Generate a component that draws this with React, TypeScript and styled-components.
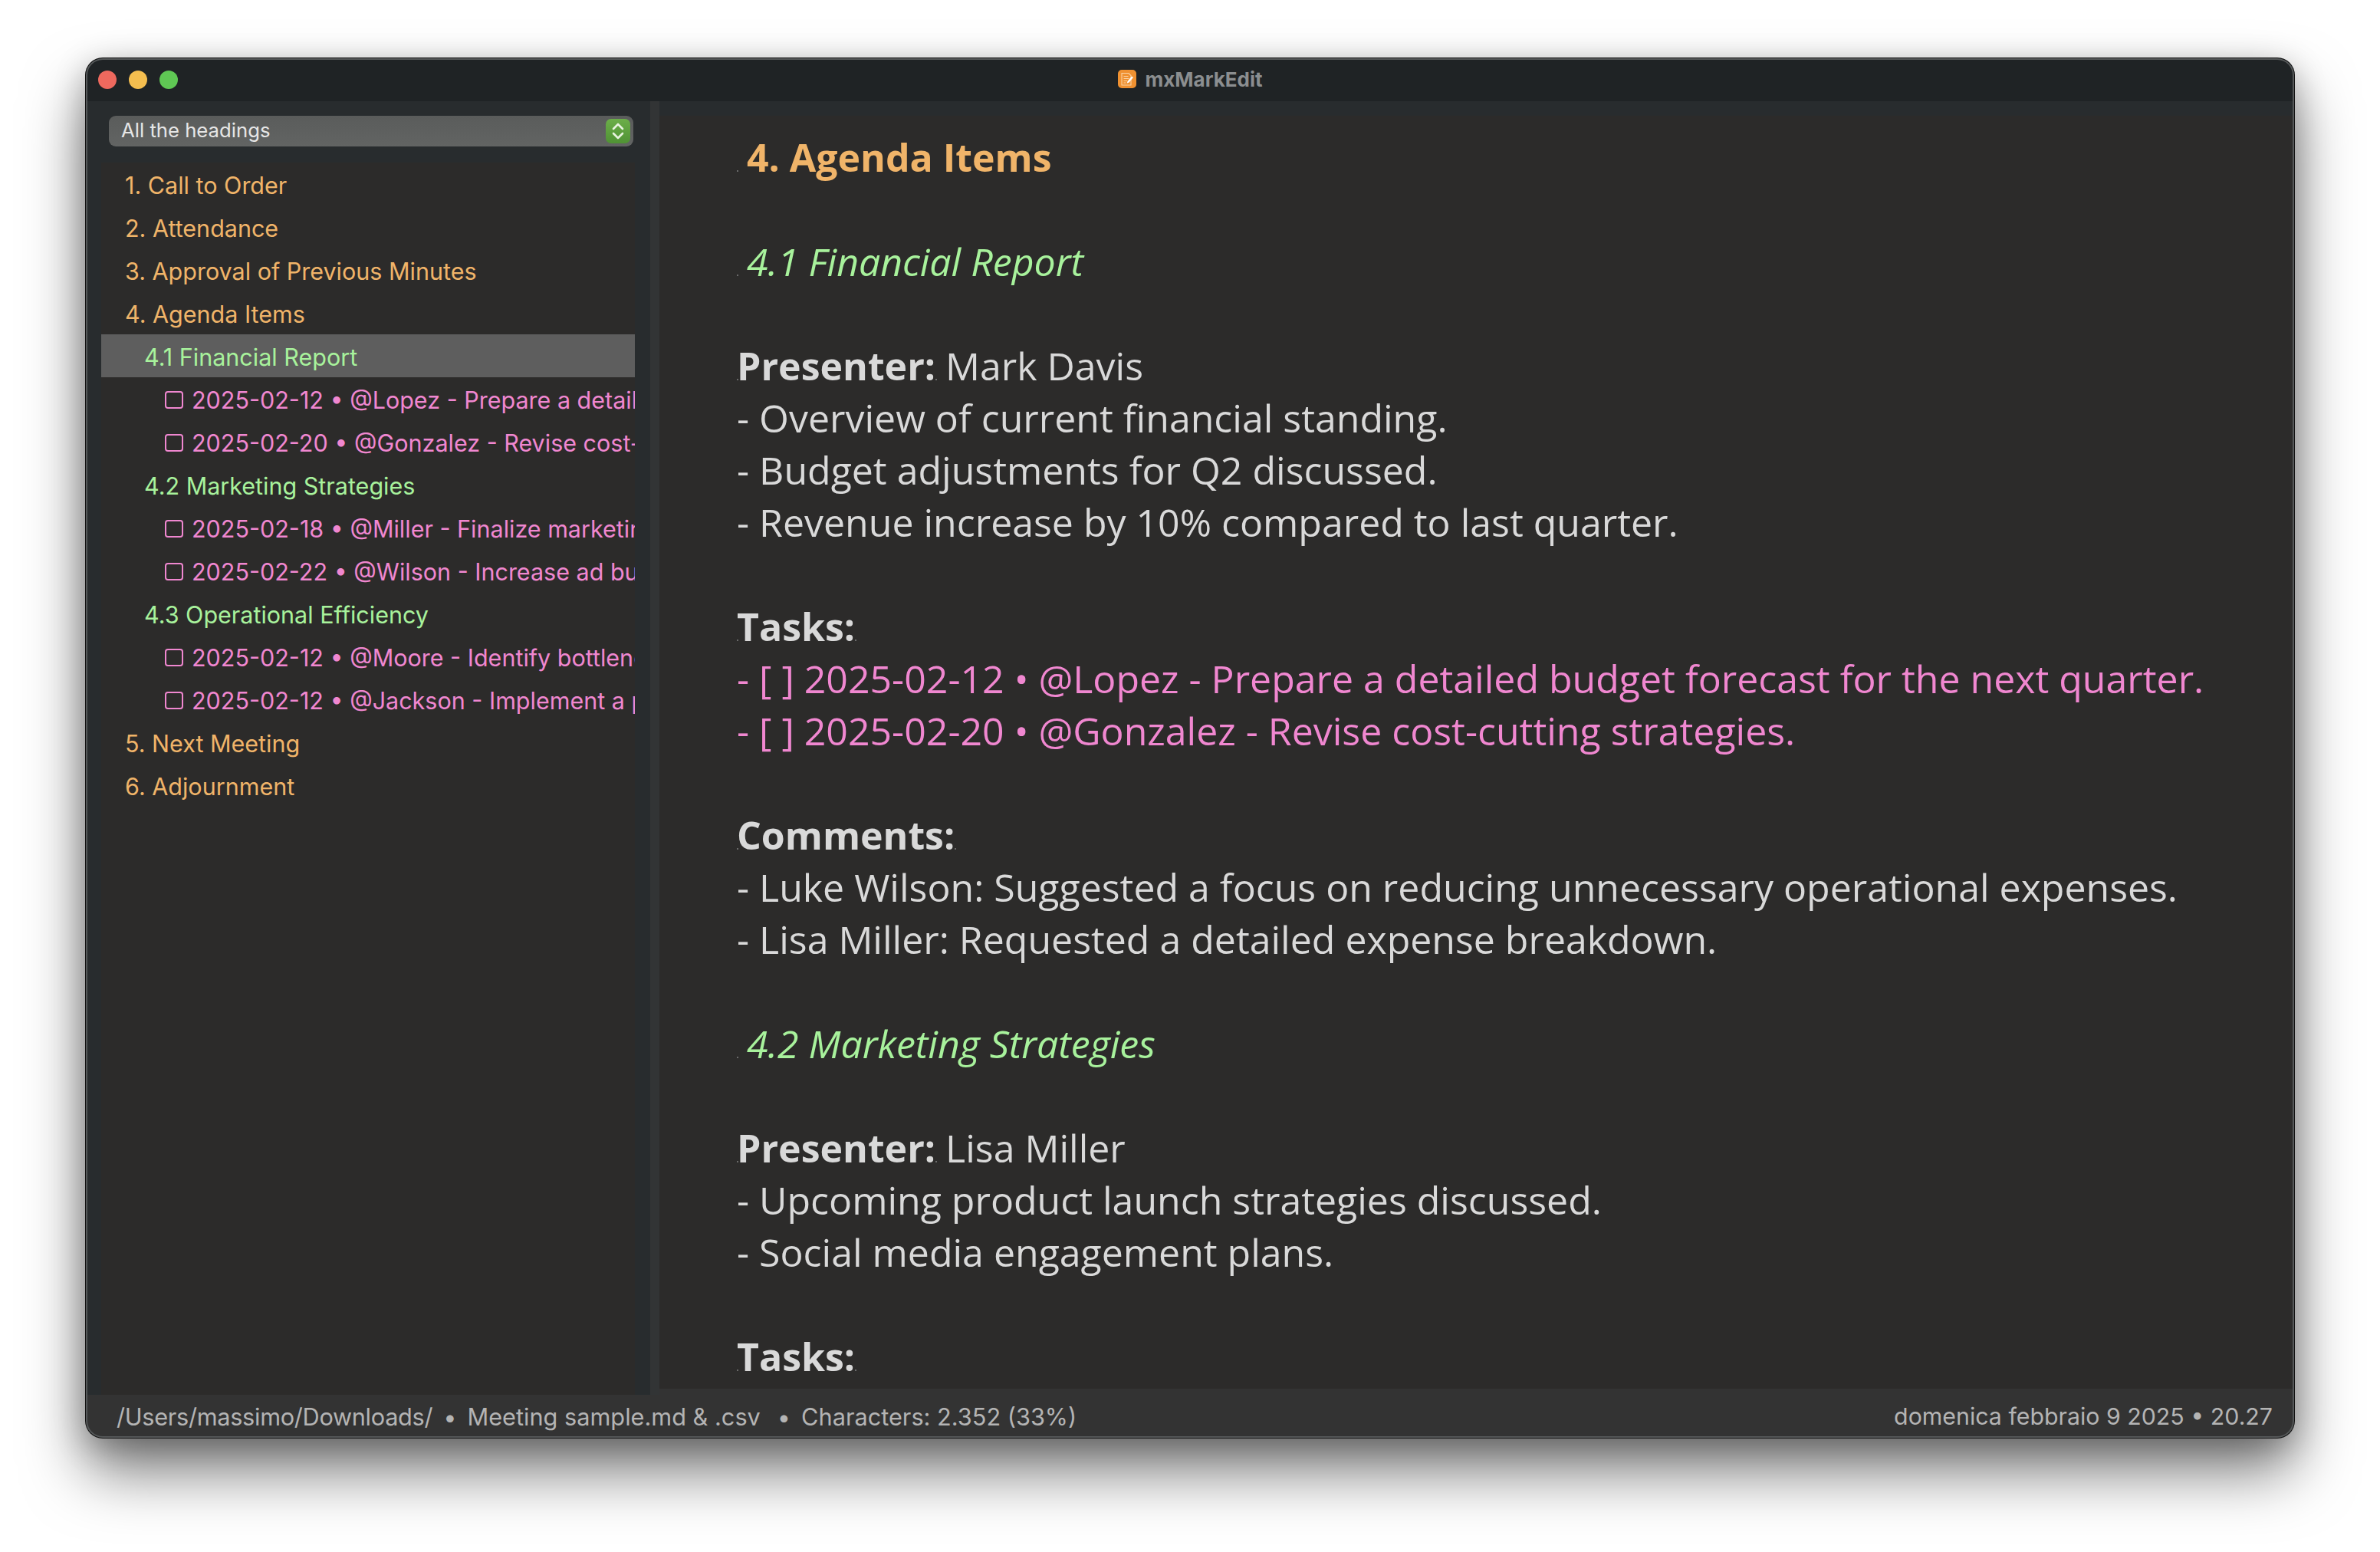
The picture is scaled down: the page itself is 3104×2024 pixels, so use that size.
import React from 'react'
import styled, { createGlobalStyle } from 'styled-components'

const Global = createGlobalStyle`
  html, body { margin: 0; padding: 0; background: #fff; }
  body { width: 3104px; height: 2024px; overflow: hidden; }
`

const Page = styled.div`
  width: 3104px;
  height: 2024px;
  padding: 76px 112px 149px 112px;
  box-sizing: border-box;
  display: flex;
`

const Window = styled.div`
  position: relative;
  flex: 1;
  min-width: 0;
  display: flex;
  flex-direction: column;
  overflow: hidden;
  border-radius: 22px;
  background: #282c2e;
  box-shadow: 0 0 0 1px #111, 0 44px 80px rgba(0, 0, 0, 0.52), 0 10px 40px rgba(0, 0, 0, 0.25);

  &::after {
    content: '';
    position: absolute;
    inset: 0;
    border-radius: 22px;
    box-shadow: inset 0 0 0 2px #555859;
    pointer-events: none;
  }
`

const TitleBar = styled.div`
  position: relative;
  height: 56px;
  flex: none;
  background: #1f2325;
  display: flex;
  align-items: center;
  justify-content: center;
  gap: 12px;
  padding-bottom: 2px;
  box-sizing: border-box;
`

const Lights = styled.div`
  position: absolute;
  left: 16px;
  top: 16px;
  display: flex;
  gap: 16px;
`

const Light = styled.span<{ $color: string }>`
  width: 24px;
  height: 24px;
  border-radius: 50%;
  background: ${(p) => p.$color};
`

const AppName = styled.span`
  font: 700 26px Inter, sans-serif;
  color: #8b8e90;
`

const Body = styled.div`
  flex: 1;
  min-height: 0;
  display: flex;
`

const Sidebar = styled.aside`
  width: 736px;
  flex: none;
  background: #282c2e;
  padding: 19px 0 0 20px;
  box-sizing: border-box;
  display: flex;
  flex-direction: column;
`

const Select = styled.div`
  width: 684px;
  height: 40px;
  margin-left: 10px;
  box-sizing: border-box;
  border-radius: 9px;
  background: linear-gradient(#5a5c5b, #626463);
  padding: 0 4px 3px 16px;
  display: flex;
  align-items: center;
  justify-content: space-between;
  font: 400 25.7px Inter, sans-serif;
  color: #e6e6e6;
`

const Stepper = styled.span`
  width: 32px;
  height: 32px;
  margin-top: 3px;
  border-radius: 7px;
  background: linear-gradient(#6cae49, #4f9234);
  display: flex;
  align-items: center;
  justify-content: center;
`

const Outline = styled.div`
  flex: 1;
  margin-top: 21px;
  width: 696px;
  background: #2c2b2a;
  overflow: hidden;
`

const INDENTS = [31, 56, 83]

const Row = styled.div<{ $level: number; $color: string; $active?: boolean }>`
  height: 56px;
  display: flex;
  align-items: center;
  gap: 11px;
  white-space: nowrap;
  overflow: hidden;
  box-sizing: border-box;
  padding: 3px 0 0 ${(p) => INDENTS[p.$level]}px;
  font: 400 30.5px Inter, sans-serif;
  color: ${(p) => p.$color};
  background: ${(p) => (p.$active ? '#5e5e5e' : 'transparent')};
`

const Box = styled.span`
  width: 24px;
  height: 23px;
  flex: none;
  border: 2.5px solid currentColor;
  border-radius: 4px;
  box-sizing: border-box;
`

const Splitter = styled.div`
  width: 12px;
  flex: none;
  background: #323435;
`

const EditorColumn = styled.main`
  flex: 1;
  display: flex;
  flex-direction: column;
  min-width: 0;
`

const TopStrip = styled.div`
  height: 19px;
  flex: none;
  background: #282c2e;
`

const BottomStrip = styled.div`
  height: 8px;
  flex: none;
  background: #333333;
`

const Editor = styled.div`
  flex: 1;
  min-height: 0;
  overflow: hidden;
  background: #2c2b2a;
  padding: 20px 0 0 101px;
  font: 400 50px/68px "Open Sans", sans-serif;
  color: #d9d9d9;
`

const Line = styled.div`
  height: 68px;
  white-space: nowrap;
`

const Hidden = styled.span`
  display: inline-block;
  width: 2px;
  height: 2px;
  margin-right: -2px;
  background: #6a6a6a;
`

const Indent = styled.span`
  display: inline-block;
  width: 13px;
`

const H1 = styled(Line)`
  font-weight: 700;
  color: #f0b469;
`

const H2 = styled(Line)`
  font-style: italic;
  color: #a8f29c;
`

const Task = styled(Line)`
  color: #f087d0;
`

const StatusBar = styled.footer`
  height: 56px;
  flex: none;
  background: #333333;
  padding: 0 28px 0 40px;
  display: flex;
  align-items: center;
  justify-content: space-between;
  font: 400 30.3px Inter, sans-serif;
  color: #b4b4b4;
`

const StatusLeft = styled.div`
  display: flex;
  gap: 14px;
  font-size: 30.7px;
`

const PathText = styled.span`
  letter-spacing: -0.3px;
`

const Sep = styled.span<{ $wide?: boolean }>`
  margin-left: ${(p) => (p.$wide ? 8 : 0)}px;
`

const AppIcon = () => (
  <svg width="24" height="24" viewBox="0 0 24 24">
    <rect width="24" height="24" rx="5" fill="#ef9131" />
    <path d="M5 4.5h9l3 3v12.5H5z" fill="none" stroke="#fbd3a3" strokeWidth="1.1" />
    <path d="M7.5 8.5h6M7.5 11.5h7M7.5 14.5h4.5M7.5 17h3" stroke="#fbd3a3" strokeWidth="1.1" />
    <path d="M12.5 15l5.5-6.5 2 1.6-5.5 6.5-2.6 1z" fill="#fff" />
  </svg>
)

const StepperIcon = () => (
  <svg width="18" height="24" viewBox="0 0 18 24" fill="none" stroke="#e8f3df" strokeWidth="2.6" strokeLinecap="round" strokeLinejoin="round">
    <path d="M3 9l6-6 6 6" />
    <path d="M3 15l6 6 6-6" />
  </svg>
)

const ORANGE = '#f0b469'
const GREEN = '#a8f29c'
const PINK = '#f087d0'

const outline = [
  { text: '1. Call to Order', level: 0, color: ORANGE },
  { text: '2. Attendance', level: 0, color: ORANGE },
  { text: '3. Approval of Previous Minutes', level: 0, color: ORANGE },
  { text: '4. Agenda Items', level: 0, color: ORANGE },
  { text: '4.1 Financial Report', level: 1, color: GREEN, active: true },
  { text: '2025-02-12 • @Lopez - Prepare a detailed budget forecast', level: 2, color: PINK, task: true },
  { text: '2025-02-20 • @Gonzalez - Revise cost-cutting strategies.', level: 2, color: PINK, task: true },
  { text: '4.2 Marketing Strategies', level: 1, color: GREEN },
  { text: '2025-02-18 • @Miller - Finalize marketing materials', level: 2, color: PINK, task: true },
  { text: '2025-02-22 • @Wilson - Increase ad budget', level: 2, color: PINK, task: true },
  { text: '4.3 Operational Efficiency', level: 1, color: GREEN },
  { text: '2025-02-12 • @Moore - Identify bottlenecks', level: 2, color: PINK, task: true },
  { text: '2025-02-12 • @Jackson - Implement a process', level: 2, color: PINK, task: true },
  { text: '5. Next Meeting', level: 0, color: ORANGE },
  { text: '6. Adjournment', level: 0, color: ORANGE },
]

export default function App() {
  return (
    <>
      <Global />
      <Page>
        <Window>
          <TitleBar>
            <Lights>
              <Light $color="#ee695e" />
              <Light $color="#f4be4f" />
              <Light $color="#5fc854" />
            </Lights>
            <AppIcon />
            <AppName>mxMarkEdit</AppName>
          </TitleBar>
          <Body>
            <Sidebar>
              <Select>
                All the headings
                <Stepper><StepperIcon /></Stepper>
              </Select>
              <Outline>
                {outline.map((r) => (
                  <Row key={r.text} $level={r.level} $color={r.color} $active={r.active}>
                    {r.task && <Box />}
                    {r.text}
                  </Row>
                ))}
              </Outline>
            </Sidebar>
            <Splitter />
            <EditorColumn>
              <TopStrip />
              <Editor>
                <H1><Hidden /><Indent />4. Agenda Items</H1>
                <Line />
                <H2><Hidden /><Indent />4.1 Financial Report</H2>
                <Line />
                <Line><Hidden /><b>Presenter:</b><Hidden /> Mark Davis</Line>
                <Line>- Overview of current financial standing.</Line>
                <Line>- Budget adjustments for Q2 discussed.</Line>
                <Line>- Revenue increase by 10% compared to last quarter.</Line>
                <Line />
                <Line><Hidden /><b>Tasks:</b><Hidden /></Line>
                <Task>- [ ] 2025-02-12 • @Lopez - Prepare a detailed budget forecast for the next quarter.</Task>
                <Task>- [ ] 2025-02-20 • @Gonzalez - Revise cost-cutting strategies.</Task>
                <Line />
                <Line><Hidden /><b>Comments:</b><Hidden /></Line>
                <Line>- Luke Wilson: Suggested a focus on reducing unnecessary operational expenses.</Line>
                <Line>- Lisa Miller: Requested a detailed expense breakdown.</Line>
                <Line />
                <H2><Hidden /><Indent />4.2 Marketing Strategies</H2>
                <Line />
                <Line><Hidden /><b>Presenter:</b><Hidden /> Lisa Miller</Line>
                <Line>- Upcoming product launch strategies discussed.</Line>
                <Line>- Social media engagement plans.</Line>
                <Line />
                <Line><Hidden /><b>Tasks:</b><Hidden /></Line>
              </Editor>
              <BottomStrip />
            </EditorColumn>
          </Body>
          <StatusBar>
            <StatusLeft>
              <PathText>/Users/massimo/Downloads/</PathText>
              <Sep>•</Sep>
              <span>Meeting sample.md &amp; .csv</span>
              <Sep $wide>•</Sep>
              <span>Characters: 2.352 (33%)</span>
            </StatusLeft>
            <span>domenica febbraio 9 2025 • 20.27</span>
          </StatusBar>
        </Window>
      </Page>
    </>
  )
}
